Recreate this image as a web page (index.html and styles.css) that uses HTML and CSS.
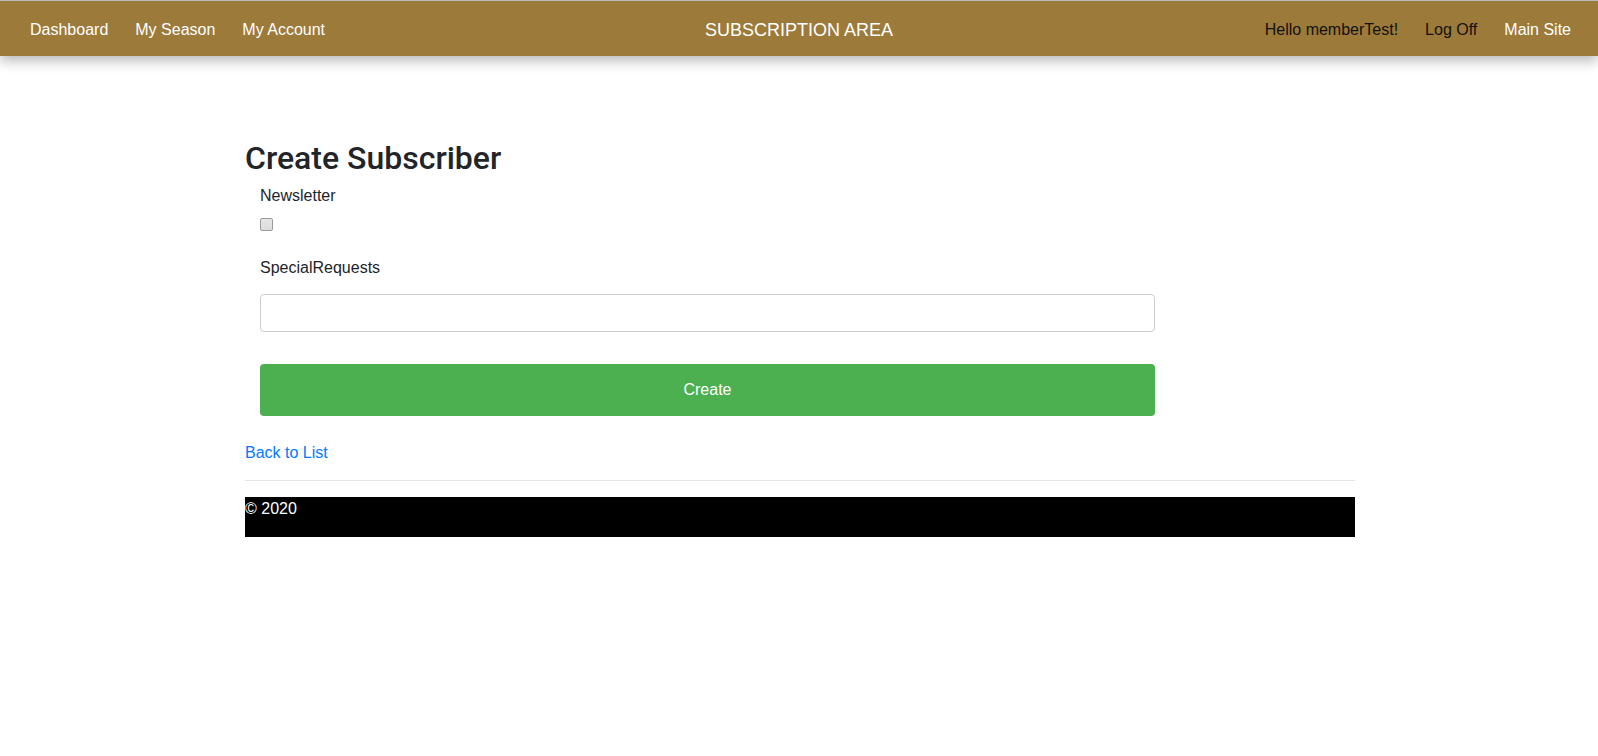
FILE: index.html
```html
<!DOCTYPE html>
<html lang="en">
<head>
<meta charset="utf-8">
<title>Create Subscriber</title>
<link rel="stylesheet" href="styles.css">
</head>
<body>
<header class="navbar">
  <nav class="nav-left">
    <a class="nav-link" href="#">Dashboard</a>
    <a class="nav-link" href="#">My Season</a>
    <a class="nav-link" href="#">My Account</a>
  </nav>
  <div class="brand">SUBSCRIPTION AREA</div>
  <nav class="nav-right">
    <span class="nav-text">Hello memberTest!</span>
    <a class="nav-link dark" href="#">Log Off</a>
    <a class="nav-link" href="#">Main Site</a>
  </nav>
</header>
<main class="container">
  <h2 class="page-title">Create Subscriber</h2>
  <form class="form">
    <label class="form-label" for="newsletter">Newsletter</label>
    <div class="check-row"><input class="checkbox" type="checkbox" id="newsletter"></div>
    <label class="form-label label-requests" for="requests">SpecialRequests</label>
    <input class="text-input" type="text" id="requests">
    <button class="btn-create" type="button">Create</button>
  </form>
  <a class="back-link" href="#">Back to List</a>
  <hr class="divider">
  <footer class="footer">© 2020</footer>
</main>
</body>
</html>
```

FILE: styles.css
```css
html, body {
  margin: 0;
  padding: 0;
  background: #fff;
}
body {
  font-family: "Liberation Sans", Arial, sans-serif;
  font-size: 16px;
  line-height: 1.5;
  color: #212529;
}
.navbar {
  display: grid;
  grid-template-columns: 1fr auto 1fr;
  align-items: center;
  height: 56px;
  box-sizing: border-box;
  padding-top: 3px;
  border-top: 1px solid #b8b8b8;
  background: #9c7a3a;
  box-shadow: 0 5px 12px rgba(0, 0, 0, 0.28);
  position: relative;
}
.nav-left, .nav-right {
  display: flex;
  align-items: center;
  gap: 27px;
}
.nav-left {
  padding-left: 30px;
}
.nav-right {
  justify-content: flex-end;
  padding-right: 27px;
}
.nav-link {
  color: #fff;
  text-decoration: none;
}
.nav-link.dark, .nav-text {
  color: #111;
}
.brand {
  color: #fff;
  font-size: 18px;
}
.container {
  width: 1110px;
  margin-left: calc(50% - 554px);
  padding-top: 83px;
}
.page-title {
  margin: 0;
  font-family: Roboto, "Liberation Sans", Arial, sans-serif;
  font-size: 32px;
  font-weight: 500;
  line-height: 1.2;
}
.form {
  padding-left: 15px;
  width: 895px;
  display: flex;
  flex-direction: column;
  align-items: flex-start;
  padding-top: 7px;
}
.form-label {
  display: block;
  line-height: 24px;
}
.check-row {
  height: 13px;
  margin-top: 10px;
  display: flex;
}
.checkbox {
  appearance: none;
  -webkit-appearance: none;
  margin: 0;
  width: 13px;
  height: 13px;
  box-sizing: border-box;
  border: 1px solid #9a9a9a;
  border-radius: 2px;
  background: linear-gradient(#e6e6e6, #dcdcdc);
}
.label-requests {
  margin-top: 25px;
}
.text-input {
  margin-top: 14px;
  width: 100%;
  height: 38px;
  box-sizing: border-box;
  border: 1px solid #cccccc;
  border-radius: 4px;
  font: inherit;
  padding: 6px 12px;
}
.btn-create {
  margin-top: 32px;
  width: 100%;
  height: 52px;
  border: none;
  border-radius: 4px;
  background: #4caf50;
  color: #fff;
  font: inherit;
  font-size: 16px;
  cursor: pointer;
}
.back-link {
  display: inline-block;
  margin-top: 25px;
  color: #007bff;
  text-decoration: none;
  line-height: 24px;
}
.divider {
  margin: 15px 0 0;
  border: 0;
  border-top: 1px solid #e5e5e5;
}
.footer {
  margin-top: 16px;
  height: 40px;
  background: #000;
  color: #fff;
  line-height: 24px;
}
```
